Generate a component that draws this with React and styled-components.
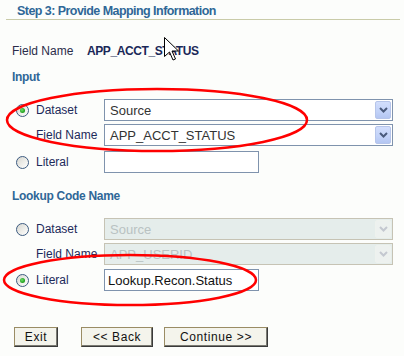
import React from "react";
import styled, { createGlobalStyle } from "styled-components";

const Global = createGlobalStyle`
  html, body { margin: 0; padding: 0; background: #fcfdfb; }
  body { font-family: "Liberation Sans", Arial, sans-serif; }
`;

const Page = styled.div`
  position: relative;
  width: 404px;
  height: 356px;
  background: #fcfdfb;
  overflow: hidden;
`;

const Header = styled.div`
  margin: 0 4px 0 6px;
  padding: 4px 0 0 11px;
  height: 15px;
  line-height: 15px;
  border-bottom: 1px solid #c9cba8;
  font-size: 12.5px;
  font-weight: bold;
  letter-spacing: -0.55px;
  color: #2f6797;
`;

const InfoRow = styled.div`
  display: grid;
  grid-template-columns: 75px auto;
  margin-top: 23px;
  padding-left: 12px;
  line-height: 16px;
  font-size: 12px;
`;

const InfoLabel = styled.span`
  color: #2a2c4a;
`;

const InfoValue = styled.span`
  color: #1a2858;
  font-weight: bold;
  letter-spacing: -0.4px;
`;

const SectionTitle = styled.div`
  margin-top: ${(p) => p.$top}px;
  padding-left: 12px;
  line-height: 16px;
  font-size: 12px;
  font-weight: bold;
  letter-spacing: -0.3px;
  color: #2f6797;
`;

const Form = styled.div`
  display: flex;
  flex-direction: column;
  margin-top: 14px;
  padding-left: 16px;
`;

const Row = styled.div`
  display: grid;
  grid-template-columns: 20px 68px auto;
  align-items: center;
  height: 22px;
  margin-top: ${(p) => p.$gap || 0}px;
`;

const Radio = styled.span`
  grid-column: 1;
  position: relative;
  width: 11px;
  height: 11px;
  border-radius: 50%;
  border: 1px solid #3c5b80;
  background: linear-gradient(135deg, #d6d6d0 0%, #eeeeea 55%, #ffffff 100%);
  &::after {
    content: "";
    display: ${(p) => (p.$checked ? "block" : "none")};
    position: absolute;
    left: 3px;
    top: 3px;
    width: 5px;
    height: 5px;
    border-radius: 50%;
    background: radial-gradient(circle at 40% 40%, #6fe06a 0%, #25a523 60%, #1d8a1c 100%);
  }
`;

const Label = styled.span`
  grid-column: 2;
  font-size: 12px;
  color: #1c2a5a;
  white-space: nowrap;
`;

const SelectBox = styled.div`
  grid-column: 3;
  box-sizing: border-box;
  width: 289px;
  height: 22px;
  display: flex;
  align-items: center;
  justify-content: space-between;
  padding: 0 1px 0 5px;
  border: 1px solid ${(p) => (p.$disabled ? "#c6c3b4" : "#7f93ad")};
  background: ${(p) => (p.$disabled ? "#e5edeb" : "#ffffff")};
  font-size: 13px;
  color: ${(p) => (p.$disabled ? "#b9c2c2" : "#333333")};
`;

const DropButton = styled.span`
  box-sizing: border-box;
  width: 16px;
  height: 18px;
  display: flex;
  align-items: center;
  justify-content: center;
  border-radius: 2px;
  border: 1px solid ${(p) => (p.$disabled ? "#eef2ee" : "#b6c5ea")};
  background: ${(p) =>
    p.$disabled
      ? "#edf1ef"
      : "linear-gradient(180deg, #d2defc 0%, #c2d2f8 60%, #b4c6f2 100%)"};
`;

const TextBox = styled.div`
  grid-column: 3;
  box-sizing: border-box;
  width: 155px;
  height: 22px;
  display: flex;
  align-items: center;
  padding-left: 3px;
  border: 1px solid #7f93ad;
  background: #ffffff;
  font-size: 13px;
  color: #111111;
`;

const ButtonBar = styled.div`
  display: flex;
  align-items: center;
  margin-top: 36px;
  padding-left: 14px;
`;

const Button = styled.div`
  box-sizing: border-box;
  width: ${(p) => p.$w}px;
  height: 20px;
  margin-left: ${(p) => p.$ml || 0}px;
  display: flex;
  align-items: center;
  justify-content: center;
  background: #f4f4ec;
  border: 1px solid;
  border-color: #9a8c64 #3a3a3a #3a3a3a #9a8c64;
  box-shadow: inset -1px -1px 0 #7a7a72;
  font-size: 12px;
  letter-spacing: 0.6px;
  color: #111111;
`;

const Overlay = styled.svg`
  position: absolute;
  left: 0;
  top: 0;
  width: 404px;
  height: 356px;
  pointer-events: none;
`;

const Chevron = ({ disabled }) => (
  <svg width="9" height="6" viewBox="0 0 9 6">
    <polyline
      points="1,1 4.5,4.5 8,1"
      fill="none"
      stroke={disabled ? "#c4c8d0" : "#4a5a7c"}
      strokeWidth="2"
    />
  </svg>
);

const Select = ({ value, disabled }) => (
  <SelectBox $disabled={disabled}>
    <span>{value}</span>
    <DropButton $disabled={disabled}>
      <Chevron disabled={disabled} />
    </DropButton>
  </SelectBox>
);

export default function App() {
  return (
    <Page>
      <Global />
      <Header>Step 3: Provide Mapping Information</Header>
      <InfoRow>
        <InfoLabel>Field Name</InfoLabel>
        <InfoValue>APP_ACCT_STATUS</InfoValue>
      </InfoRow>
      <SectionTitle $top={10}>Input</SectionTitle>
      <Form>
        <Row>
          <Radio $checked />
          <Label>Dataset</Label>
          <Select value="Source" />
        </Row>
        <Row $gap={3}>
          <Label>Field Name</Label>
          <Select value="APP_ACCT_STATUS" />
        </Row>
        <Row $gap={5}>
          <Radio />
          <Label>Literal</Label>
          <TextBox />
        </Row>
      </Form>
      <SectionTitle $top={15}>Lookup Code Name</SectionTitle>
      <Form>
        <Row>
          <Radio />
          <Label>Dataset</Label>
          <Select value="Source" disabled />
        </Row>
        <Row $gap={3}>
          <Label>Field Name</Label>
          <Select value="APP_USERID" disabled />
        </Row>
        <Row $gap={4}>
          <Radio $checked />
          <Label>Literal</Label>
          <TextBox>Lookup.Recon.Status</TextBox>
        </Row>
      </Form>
      <ButtonBar>
        <Button $w={44}>Exit</Button>
        <Button $w={72} $ml={23}>&lt;&lt; Back</Button>
        <Button $w={104} $ml={11}>Continue &gt;&gt;</Button>
      </ButtonBar>
      <Overlay viewBox="0 0 404 356">
        <ellipse cx="157" cy="120" rx="150" ry="31" fill="none" stroke="#ff0000" strokeWidth="2.5" />
        <ellipse cx="130" cy="280" rx="126" ry="25" fill="none" stroke="#ff0000" strokeWidth="2.5" />
        <path
          d="M164.5 37.5 L164.5 56.5 L169.5 52 L173 60 L175.5 59 L172 51 L178.5 51 Z"
          fill="#ffffff"
          stroke="#000000"
          strokeWidth="1"
          strokeLinejoin="miter"
        />
      </Overlay>
    </Page>
  );
}
